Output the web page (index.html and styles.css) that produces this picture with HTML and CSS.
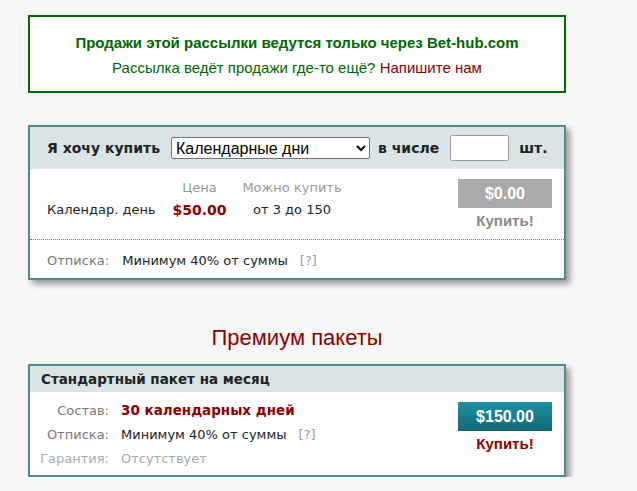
FILE: index.html
```html
<!DOCTYPE html>
<html lang="ru">
<head>
  <meta charset="UTF-8">
  <title>Подписка</title>
  <link rel="stylesheet" href="styles.css">
</head>
<body>

<div class="page">

  <div class="notice">
    <div class="notice-title">Продажи этой рассылки ведутся только через Bet-hub.com</div>
    <div class="notice-text">Рассылка ведёт продажи где-то ещё? <a href="#" class="notice-link">Напишите нам</a></div>
  </div>

  <div class="box buy-box">
    <div class="buy-head">
      <span class="head-label">Я хочу купить</span>
      <select class="buy-select">
        <option>Календарные дни</option>
      </select>
      <span class="head-label head-count">в числе</span>
      <input type="text" class="buy-input">
      <span class="head-label head-unit">шт.</span>
    </div>

    <div class="buy-body">
      <div class="offer">
        <div></div>
        <div class="offer-th">Цена</div>
        <div class="offer-th">Можно купить</div>
        <div class="offer-name">Календар. день</div>
        <div class="offer-price">$50.00</div>
        <div class="offer-range">от 3 до 150</div>
      </div>
      <div class="buy-side">
        <div class="price-btn disabled">$0.00</div>
        <div class="buy-link disabled">Купить!</div>
      </div>
    </div>

    <div class="buy-foot">
      <span class="label">Отписка:</span>
      <span class="value">Минимум 40% от суммы</span>
      <a href="#" class="help">[?]</a>
    </div>
  </div>

  <h2 class="section-title">Премиум пакеты</h2>

  <div class="box pack-box">
    <div class="pack-head">Стандартный пакет на месяц</div>
    <div class="pack-body">
      <div class="pack-info">
        <div class="label">Состав:</div>
        <div class="value strong">30 календарных дней</div>
        <div class="label">Отписка:</div>
        <div class="value">Минимум 40% от суммы <a href="#" class="help">[?]</a></div>
        <div class="label muted">Гарантия:</div>
        <div class="value muted">Отсутствует</div>
      </div>
      <div class="buy-side">
        <a href="#" class="price-btn">$150.00</a>
        <a href="#" class="buy-link">Купить!</a>
      </div>
    </div>
  </div>

</div>

</body>
</html>
```

FILE: styles.css
```css
body {
  margin: 0;
  background: #f7f7f7;
  font-family: "DejaVu Sans", Verdana, sans-serif;
  font-size: 13px;
  color: #222;
}

a {
  text-decoration: none;
}

.page {
  width: 538px;
  margin-left: 28px;
  padding-top: 15px;
}

/* notice */
.notice {
  border: 2px solid #006b00;
  background: #fff;
  text-align: center;
  font-family: "Liberation Sans", Arial, sans-serif;
  font-size: 15px;
  color: #006600;
  padding: 16px 0 13px;
}

.notice-title {
  font-weight: bold;
  line-height: 20px;
}

.notice-text {
  line-height: 20px;
  margin-top: 5px;
}

.notice-link {
  color: #8b0000;
}

/* boxes */
.box {
  border: 2px solid #4f8a8f;
  background: #fff;
  box-shadow: 4px 4px 6px rgba(0, 0, 0, 0.38);
}

.buy-box {
  margin-top: 32px;
}

.buy-head {
  display: flex;
  align-items: center;
  height: 42px;
  background: #d9e4e5;
  padding-left: 17px;
}

.head-label {
  font-weight: bold;
  font-size: 14px;
  color: #222;
}

.buy-select {
  width: 199px;
  height: 22px;
  margin-left: 11px;
  font-family: "Liberation Sans", Arial, sans-serif;
  font-size: 16px;
  color: #000;
  background: #fff;
  border: 1px solid #767676;
  border-radius: 2px;
}

.head-count {
  margin-left: 8px;
}

.buy-input {
  width: 59px;
  height: 26px;
  box-sizing: border-box;
  margin-left: 11px;
  border: 1px solid #999;
  border-radius: 2px;
}

.head-unit {
  margin-left: 10px;
}

.buy-body {
  display: flex;
  height: 70px;
  padding: 0 12px 0 17px;
  border-bottom: 1px dotted #777;
}

.offer {
  display: grid;
  grid-template-columns: 116px 73px 112px;
  grid-template-rows: 18px 18px;
  row-gap: 4px;
  padding-top: 10px;
  line-height: 18px;
  flex: 1;
}

.offer-th {
  text-align: center;
  color: #999;
}

.offer-name {
  color: #222;
}

.offer-price {
  text-align: center;
  color: #8b0000;
  font-weight: bold;
  font-size: 14px;
}

.offer-range {
  text-align: center;
}

.buy-side {
  width: 94px;
  padding-top: 10px;
  text-align: center;
  font-family: "Liberation Sans", Arial, sans-serif;
}

.price-btn {
  display: block;
  height: 29px;
  line-height: 29px;
  color: #fff;
  font-weight: bold;
  font-size: 16px;
  background: linear-gradient(#1f8fa1, #146b78);
}

.price-btn.disabled {
  background: #aaa;
}

.buy-link {
  display: block;
  margin-top: 4px;
  line-height: 18px;
  font-weight: bold;
  font-size: 15px;
  color: #8b0000;
}

.buy-link.disabled {
  color: #888;
}

.buy-foot {
  padding: 12px 17px 8px;
  line-height: 18px;
}

.label {
  color: #777;
  margin-right: 9px;
}

.help {
  color: #999;
  margin-left: 8px;
}

.section-title {
  margin: 44px 0 12px;
  text-align: center;
  font-family: "Liberation Sans", Arial, sans-serif;
  font-size: 22px;
  line-height: 28px;
  font-weight: normal;
  color: #8b0000;
}

.pack-head {
  height: 26px;
  line-height: 26px;
  background: #d9e4e5;
  padding-left: 11px;
  font-weight: bold;
  font-size: 13.5px;
}

.pack-body {
  display: flex;
  padding: 0 12px 5px 0;
}

.pack-info {
  flex: 1;
  display: grid;
  grid-template-columns: 79px auto;
  column-gap: 12px;
  grid-auto-rows: 24px;
  align-items: center;
  padding-top: 6px;
}

.pack-info .label {
  text-align: right;
  margin-right: 0;
}

.strong {
  color: #8b0000;
  font-weight: bold;
  font-size: 13.5px;
}

.muted {
  color: #aaa;
}
```
